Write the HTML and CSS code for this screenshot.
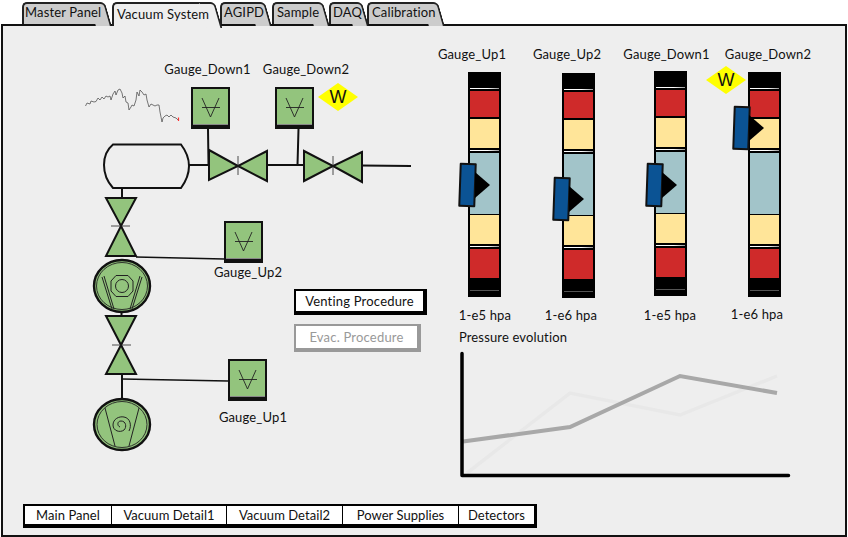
FILE: index.html
```html
<!DOCTYPE html>
<html lang="en">
<head>
<meta charset="utf-8">
<title>Vacuum System</title>
<link rel="stylesheet" href="styles.css">
</head>
<body>
<div class="screen">
  <nav class="tabs">
    <div class="tab tab-master">Master Panel</div>
    <div class="tab tab-vacuum active">Vacuum System</div>
    <div class="tab tab-agipd">AGIPD</div>
    <div class="tab tab-sample">Sample</div>
    <div class="tab tab-daq">DAQ</div>
    <div class="tab tab-calib">Calibration</div>
  </nav>
  <main class="panel">
    <div class="stage">
      <svg class="schematic" width="848" height="537" viewBox="0 0 848 537" xmlns="http://www.w3.org/2000/svg">
        <!-- sparkline -->
        <polyline class="spark" points="85.5,106 87,103 90,104 91,101 94,102 96,101.5 98,98 100,100 102,97 104,99 106,96 108,97 110,96 111,100 113,94 115,91 116,95 118,90 120,89 122,93 123,98 125,96 126,102 128,103 129,110 131,107 132,105 134,106 136,100 137,92 139,96 140,90 142,92 144,95 146,94 147,100 149,107 151,104 153,105 155,106 157,105 159,105 160,112 162,122 163,118 165,116 167,115 169,117 171,115 173,117 176,118 178,120"/>
        <path class="spark-end" d="M178.500 117.500V121"/>
        <!-- pipes -->
        <path class="pipe" d="M189 165H210M266 165H305M361 165.500L411 166M208 129L208.500 164M298.500 129L297.500 165M122 188V199"/>
        <path class="pipe-thin" d="M136 257L224 259M122 379L228 381"/>
        <path class="pipe" d="M121.500 311V317M122 373V399"/>
        <!-- tank -->
        <path class="tank" d="M113 144.500H181Q189 155 189 166T181 188H113Q104 178 104 165T113 144.500Z"/>
        <!-- valves -->
        <path class="valve" d="M209 150L238 166L209 180ZM267 151L238 166L267 181Z"/>
        <path class="stem" d="M238 156V175"/>
        <path class="valve" d="M304 151L333 166L304 181ZM362 152L333 166L362 182Z"/>
        <path class="stem" d="M333 156V175"/>
        <path class="valve" d="M106 198H136L121 226ZM106 256H136L121 226Z"/>
        <path class="stem" d="M111 226H130"/>
        <path class="valve" d="M106 316H136L121 345ZM106 374H136L121 345Z"/>
        <path class="stem" d="M112 345H131"/>
        <!-- pump 1 -->
        <ellipse class="pump" cx="122" cy="286" rx="28" ry="26"/>
        <ellipse class="pump-inner" cx="122" cy="286" rx="25.500" ry="23.500"/>
        <path class="pump-lines" d="M102 277L112 309M104 276L114 309M142 277L132 309M140 276L130 309"/>
        <path class="pump-lines" d="M116 275.500H128L133 281V291L128 296.500H116L111 291V281Z"/>
        <circle class="pump-lines" cx="122" cy="286" r="6.500"/>
        <!-- pump 2 -->
        <ellipse class="pump" cx="122" cy="424.500" rx="28" ry="25.500"/>
        <ellipse class="pump-inner" cx="122" cy="424.500" rx="25" ry="23"/>
        <path class="pump-lines" d="M105 408L115 446M139 408L129 446"/>
        <path class="pump-lines" d="M120 427C117 426 117 421 121 421C126 421 127 427 124 430C120 433 113 431 113 425C113 419 119 416 124 417C130 418 132 425 129 431"/>
        <!-- chart -->
        <polyline class="series-light" points="467,473 570,393 680,415 777,376"/>
        <polyline class="series-dark" points="463,441.500 570,427 680,376 777,393"/>
        <path class="axis" d="M462 353.500V475.500H788.500"/>
      </svg>

      <div class="instrument inst-d1"><svg class="glyph" viewBox="0 0 20 20"><path d="M1 1L9.500 20L18 1M1 10.500H19"/></svg></div>
      <div class="instrument inst-d2"><svg class="glyph" viewBox="0 0 20 20"><path d="M1 1L9.500 20L18 1M1 10.500H19"/></svg></div>
      <div class="instrument inst-u2"><svg class="glyph" viewBox="0 0 20 20"><path d="M1 1L9.500 20L18 1M1 10.500H19"/></svg></div>
      <div class="instrument inst-u1"><svg class="glyph" viewBox="0 0 20 20"><path d="M1 1L9.500 20L18 1M1 10.500H19"/></svg></div>

      <div class="label l-d1">Gauge_Down1</div>
      <div class="label l-d2">Gauge_Down2</div>
      <div class="label l-u2">Gauge_Up2</div>
      <div class="label l-u1">Gauge_Up1</div>

      <div class="warn warn-a">W</div>
      <div class="warn warn-b">W</div>

      <div class="btn btn-vent">Venting Procedure</div>
      <div class="btn btn-evac">Evac. Procedure</div>

      <div class="label h-u1">Gauge_Up1</div>
      <div class="label h-u2">Gauge_Up2</div>
      <div class="label h-d1">Gauge_Down1</div>
      <div class="label h-d2">Gauge_Down2</div>

      <div class="bar bar-1">
        <div class="cap"></div><div class="rule"></div><div class="cell red"></div><div class="cell yellow"></div><div class="rule"></div><div class="cell blue"></div><div class="cell yellow2"></div><div class="rule"></div><div class="cell red2"></div><div class="foot"></div>
        <div class="marker m-1"><span class="handle"></span><span class="arrow"></span></div>
      </div>
      <div class="bar bar-2">
        <div class="cap"></div><div class="rule"></div><div class="cell red"></div><div class="cell yellow"></div><div class="rule"></div><div class="cell blue"></div><div class="cell yellow2"></div><div class="rule"></div><div class="cell red2"></div><div class="foot"></div>
        <div class="marker m-2"><span class="handle"></span><span class="arrow"></span></div>
      </div>
      <div class="bar bar-3">
        <div class="cap"></div><div class="rule"></div><div class="cell red"></div><div class="cell yellow"></div><div class="rule"></div><div class="cell blue"></div><div class="cell yellow2"></div><div class="rule"></div><div class="cell red2"></div><div class="foot"></div>
        <div class="marker m-3"><span class="handle"></span><span class="arrow"></span></div>
      </div>
      <div class="bar bar-4">
        <div class="cap"></div><div class="rule"></div><div class="cell red"></div><div class="cell yellow"></div><div class="rule"></div><div class="cell blue"></div><div class="cell yellow2"></div><div class="rule"></div><div class="cell red2"></div><div class="foot"></div>
        <div class="marker m-4"><span class="handle"></span><span class="arrow"></span></div>
      </div>

      <div class="label v-1">1-e5 hpa</div>
      <div class="label v-2">1-e6 hpa</div>
      <div class="label v-3">1-e5 hpa</div>
      <div class="label v-4">1-e6 hpa</div>
      <div class="label chart-title">Pressure evolution</div>
    </div>

    <nav class="subnav">
      <div class="sub sub-main">Main Panel</div>
      <div class="sub sub-d1">Vacuum Detail1</div>
      <div class="sub sub-d2">Vacuum Detail2</div>
      <div class="sub sub-power">Power Supplies</div>
      <div class="sub sub-det">Detectors</div>
    </nav>
  </main>
</div>
</body>
</html>
```

FILE: styles.css
```css
* { box-sizing: border-box; }
html, body { margin: 0; height: 100%; background: #fff; overflow: hidden; }
body { font-family: "Lato", "Noto Sans", sans-serif; font-size: 13px; color: #111; }

.screen { width: 848px; height: 537px; display: flex; flex-direction: column; }

/* top tabs */
.tabs { display: flex; height: 24px; padding: 2px 0 0 22px; position: relative; z-index: 2; }
.tab {
  position: relative; height: 22px; background: #ccc;
  border: 2px solid #222; border-bottom: 0; border-right: 0; border-radius: 5px 0 0 0;
  padding: 0 0 0 1px; line-height: 17px; letter-spacing: .15px; white-space: nowrap;
}
.tab::after {
  content: ""; position: absolute; top: -2px; right: -6px; width: 14px; height: 22px;
  background: #ccc; border: 2px solid #222; border-left: 0; border-bottom: 0;
  border-radius: 0 5px 0 0; transform: skewX(16deg); transform-origin: top left; z-index: -1;
}
.tab-master { width: 77px; margin-right: 13px; }
.tab-vacuum { width: 97px; height: 24px; margin-right: 11px; padding: 2px 0 0 3px; }
.tab-agipd { width: 39px; margin-right: 13px; padding-left: 2px; }
.tab-sample { width: 45px; margin-right: 12px; padding-left: 3px; }
.tab-daq { width: 27px; margin-right: 11px; padding-left: 2px; }
.tab-calib { width: 65px; padding-left: 3px; }
.tab.active, .tab.active::after { background: #eee; }
.tab.active { z-index: 3; }
.tab.active::after { height: 24px; }

/* main panel */
.panel {
  position: relative; flex: 1; margin: 0 1px; background: #eee;
  border: 2px solid #111; display: flex; flex-direction: column; justify-content: flex-end;
  padding: 0 0 7px 20px;
}
.stage { position: absolute; left: -3px; top: -26px; width: 848px; height: 537px; }
.schematic { position: absolute; left: 0; top: 0; }

.spark { fill: none; stroke: #555; stroke-width: .8; }
.spark-end { stroke: #f33; stroke-width: 1.2; }
.pipe { fill: none; stroke: #111; stroke-width: 2; }
.pipe-thin { fill: none; stroke: #111; stroke-width: 1.6; }
.tank { fill: #eee; stroke: #111; stroke-width: 2; }
.valve { fill: #93c47d; stroke: #111; stroke-width: 2; stroke-linejoin: miter; }
.stem { stroke: #222; stroke-width: .8; fill: none; }
.pump { fill: #93c47d; stroke: #111; stroke-width: 2.4; }
.pump-inner { fill: none; stroke: #222; stroke-width: .9; }
.pump-lines { fill: none; stroke: #222; stroke-width: 1; }
.series-light { fill: none; stroke: #e8e8e8; stroke-width: 3.5; }
.series-dark { fill: none; stroke: #a8a8a8; stroke-width: 4; }
.axis { fill: none; stroke: #000; stroke-width: 3.5; stroke-linecap: round; stroke-linejoin: round; }

/* instruments */
.instrument {
  position: absolute; width: 39px; height: 42px; background: #93c47d;
  border: 2.500px solid #111; border-bottom-width: 4px;
  box-shadow: inset 0 -1px 0 #888;
  display: flex; align-items: center; justify-content: center;
}
.inst-d1 { left: 191px; top: 87px; }
.inst-d2 { left: 275px; top: 87px; }
.inst-u2 { left: 224px; top: 221px; }
.inst-u1 { left: 228px; top: 359px; }
.glyph { width: 20px; height: 20px; fill: none; stroke: #222; stroke-width: .9; }

/* labels */
.label { position: absolute; transform: translate(-50%, -50%); white-space: nowrap; letter-spacing: .15px; line-height: 16px; }
.l-d1 { left: 207.500px; top: 69px; }
.l-d2 { left: 306px; top: 69px; }
.l-u2 { left: 248px; top: 272px; }
.l-u1 { left: 253px; top: 417px; }
.h-u1 { left: 472px; top: 54px; }
.h-u2 { left: 567px; top: 54px; }
.h-d1 { left: 666.500px; top: 54px; }
.h-d2 { left: 768px; top: 54px; }
.v-1 { left: 485px; top: 315px; }
.v-2 { left: 571px; top: 315px; }
.v-3 { left: 670px; top: 315px; }
.v-4 { left: 757px; top: 314px; }
.chart-title { left: 513px; top: 337px; }

/* warning diamonds */
.warn {
  position: absolute; width: 40px; height: 28px; background: #ff0;
  clip-path: polygon(50% 0, 100% 50%, 50% 100%, 0 50%);
  font-family: "Liberation Sans", sans-serif; font-size: 18px; color: #111;
  display: flex; align-items: center; justify-content: center;
}
.warn-a { left: 318px; top: 83px; }
.warn-b { left: 706px; top: 66px; }

/* buttons */
.btn {
  position: absolute; background: #fff; display: flex; align-items: center; justify-content: center;
  border: 2px solid #000; border-right-width: 4px; border-bottom-width: 4px;
  letter-spacing: .2px; white-space: nowrap;
}
.btn-vent { left: 294px; top: 289px; width: 133px; height: 26px; }
.btn-evac { left: 294px; top: 324px; width: 127px; height: 28px; border-color: #999; color: #999; }

/* level bars */
.bar {
  position: absolute; width: 33px; height: 225px; background: #000;
  display: flex; flex-direction: column; padding: 0 2px;
}
.bar-1 { left: 468px; top: 72px; }
.bar-2 { left: 562px; top: 73px; }
.bar-3 { left: 654px; top: 71px; }
.bar-4 { left: 748px; top: 72px; }
.cap { height: 16px; flex: none; }
.rule { height: 1px; flex: none; background: linear-gradient(90deg, #fff 60%, #999); }
.cell { flex: none; width: 29px; }
.red { height: 26px; margin-top: 2px; background: #cf2a2a; }
.yellow { height: 29px; margin: 2px 0; background: #ffe599; }
.blue { height: 61px; margin-top: 2px; background: #a2c4c9; }
.yellow2 { height: 29px; margin: 1px 0 2px; background: #ffe599; }
.red2 { height: 29px; margin-top: 2px; background: #cf2a2a; }
.foot { height: 1px; margin-top: 12px; flex: none; background: #555; }

.marker { position: absolute; left: -9px; width: 32px; height: 44px; }
.m-1 { top: 91px; }
.m-2 { top: 104px; }
.m-3 { top: 92px; left: -8px; }
.m-4 { top: 34px; left: -15px; }
.handle {
  position: absolute; left: 0; top: 0; width: 17px; height: 44px; background: #0b5394;
  border: 2px solid #111; border-radius: 1px; transform: rotate(2deg);
}
.arrow {
  position: absolute; left: 16px; top: 9px; width: 15px; height: 26px; background: #000;
  clip-path: polygon(0 0, 100% 50%, 0 100%);
}

/* bottom bar */
.subnav {
  position: relative; display: flex; width: 514px; height: 24px;
  background: #fff; border: 2px solid #000; border-bottom-width: 4px; border-right-width: 3px;
}
.sub { display: flex; align-items: center; justify-content: center; letter-spacing: .05px; white-space: nowrap; border-left: 1.500px solid #000; }
.sub:first-child { border-left: 0; }
.sub-main { width: 86px; }
.sub-d1 { width: 115px; }
.sub-d2 { width: 116px; }
.sub-power { width: 116px; }
.sub-det { flex: 1; }
```
